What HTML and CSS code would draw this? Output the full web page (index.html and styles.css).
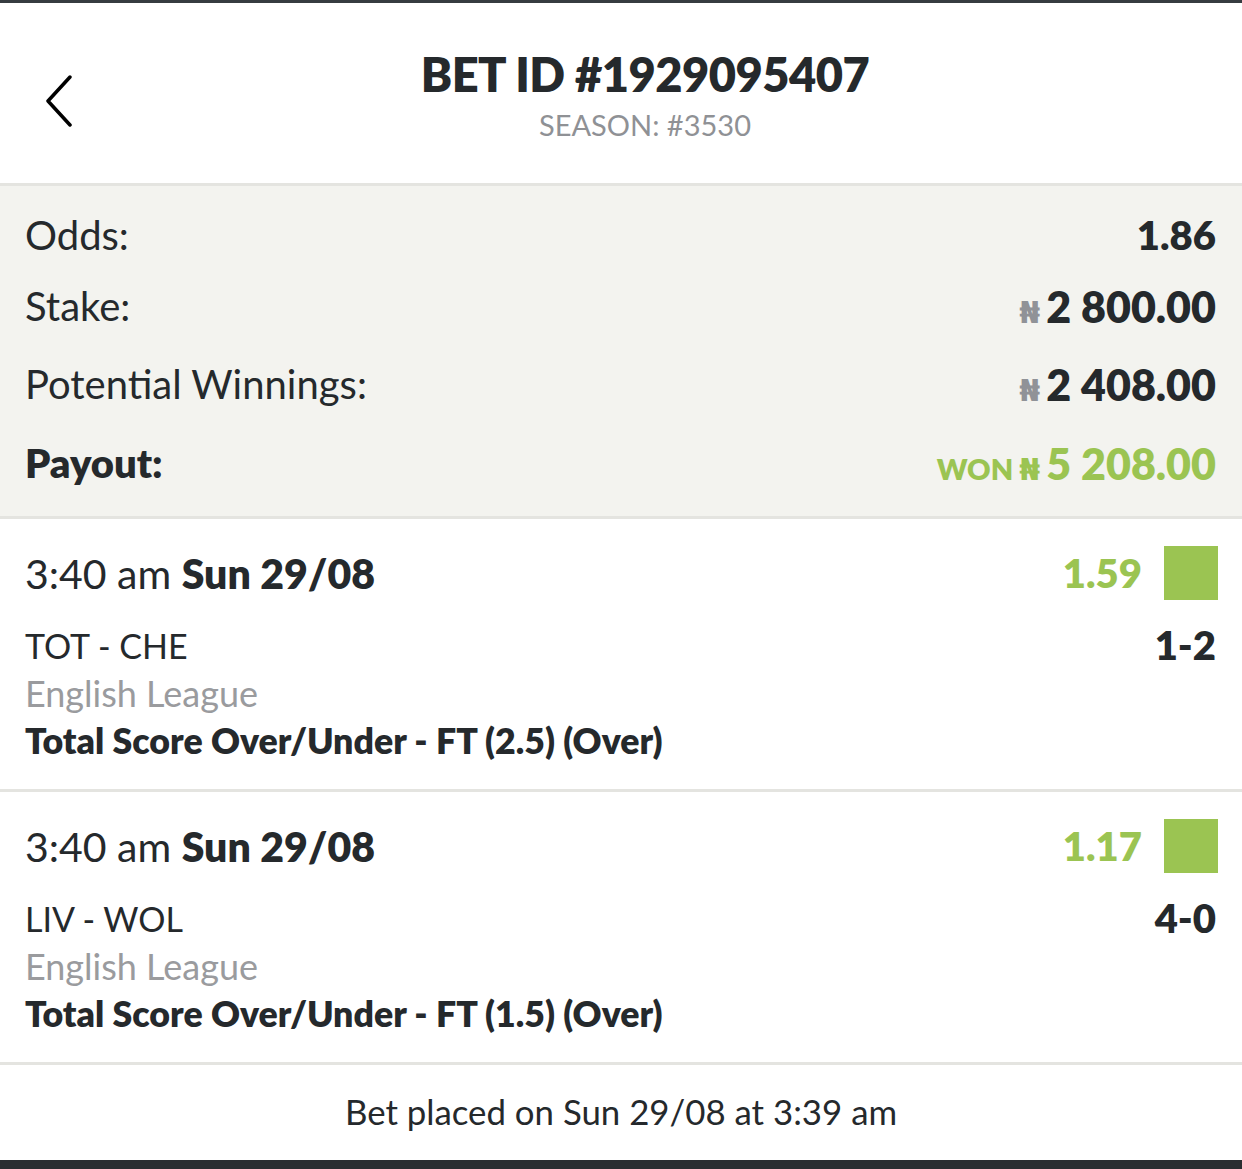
FILE: index.html
```html
<!DOCTYPE html>
<html lang="en">
<head>
  <meta charset="UTF-8" />
  <title>Bet details</title>
  <link rel="stylesheet" href="styles.css">
</head>
<body>
  <div class="page">
    <header class="top">
      <a class="back" href="#">
        <svg width="30" height="52" viewBox="0 0 30 52"><polyline points="26,2 4,26 26,50" fill="none" stroke="#000" stroke-width="3.5" stroke-linecap="round" stroke-linejoin="round"/></svg>
      </a>
      <h1 class="title">BET ID #1929095407</h1>
      <div class="season">SEASON: #3530</div>
    </header>

    <section class="summary">
      <div class="row r1"><span class="label">Odds:</span><span class="value odds">1.86</span></div>
      <div class="row r2"><span class="label">Stake:</span><span class="value"><span class="cur">₦</span>2 800.00</span></div>
      <div class="row r3"><span class="label">Potential Winnings:</span><span class="value"><span class="cur">₦</span>2 408.00</span></div>
      <div class="row r4"><span class="label strong">Payout:</span><span class="value won"><span class="won-tag">WON</span><span class="cur">₦</span>5 208.00</span></div>
    </section>

    <section class="sel">
      <div class="sel-head">
        <div class="when">3:40 am <b>Sun 29/08</b></div>
        <div class="odd">1.59</div>
        <div class="mark"></div>
      </div>
      <div class="sel-line"><span class="teams">TOT - CHE</span><span class="score">1-2</span></div>
      <div class="league">English League</div>
      <div class="market">Total Score Over/Under - FT (2.5) (Over)</div>
    </section>

    <section class="sel">
      <div class="sel-head">
        <div class="when">3:40 am <b>Sun 29/08</b></div>
        <div class="odd">1.17</div>
        <div class="mark"></div>
      </div>
      <div class="sel-line"><span class="teams">LIV - WOL</span><span class="score">4-0</span></div>
      <div class="league">English League</div>
      <div class="market">Total Score Over/Under - FT (1.5) (Over)</div>
    </section>

    <footer class="placed">Bet placed on Sun 29/08 at 3:39 am</footer>
  </div>
</body>
</html>
```

FILE: styles.css
```css
body {
  margin: 0;
  font-family: "Lato", "Open Sans", sans-serif;
  color: #25292c;
  background: #fff;
}

.page {
  border-top: 3px solid #363c40;
  border-bottom: 9px solid #2a2e31;
  height: 1157px;
  display: flex;
  flex-direction: column;
}

.top {
  position: relative;
  height: 180px;
  border-bottom: 3px solid #e4e4e0;
  text-align: center;
  padding-left: 48px;
}

.back {
  position: absolute;
  left: 44px;
  top: 72px;
}

.title {
  margin: 0;
  padding-top: 42px;
  font-size: 47px;
  font-weight: 800;
  line-height: 58px;
  letter-spacing: -0.5px;
}

.season {
  font-size: 29px;
  color: #8f9195;
  line-height: 40px;
  margin-top: 2px;
}

.summary {
  background: #f3f3ef;
  padding: 14px 26px 16px 25px;
  border-bottom: 3px solid #e4e4e0;
}

.row {
  display: flex;
  justify-content: space-between;
  align-items: center;
}

.r1 { height: 70px; }
.r2 { height: 72px; }
.r3 { height: 84px; }
.r4 { height: 74px; }

.label {
  font-size: 40px;
}

.label.strong {
  font-weight: 800;
}

.value {
  font-size: 43px;
  font-weight: 800;
}

.value.odds {
  font-size: 40px;
}

.cur {
  font-family: "DejaVu Sans", sans-serif;
  font-size: 30px;
  color: #909297;
  margin-right: 6px;
  font-weight: bold;
}

.won {
  color: #9bc452;
}

.won .cur {
  color: #9bc452;
}

.won-tag {
  font-size: 29px;
  margin-right: 6px;
}

.sel {
  padding: 27px 24px 24px 25px;
  border-bottom: 3px solid #e4e4e0;
}

.sel-head {
  display: flex;
  align-items: center;
  height: 54px;
  margin-bottom: 21px;
}

.when {
  flex: 1;
  font-size: 41px;
}

.when b {
  font-weight: 800;
}

.odd {
  color: #9bc452;
  font-size: 40px;
  font-weight: 800;
  margin-right: 22px;
}

.mark {
  width: 54px;
  height: 54px;
  background: #9bc452;
}

.sel-line {
  display: flex;
  justify-content: space-between;
  align-items: center;
  height: 48px;
}

.teams {
  font-size: 34px;
}

.score {
  font-size: 40px;
  font-weight: 800;
  margin-right: 2px;
}

.league {
  font-size: 36px;
  line-height: 48px;
  color: #9a9b9e;
}

.market {
  font-size: 35.7px;
  line-height: 48px;
  font-weight: 800;
}

.placed {
  flex: 1;
  display: flex;
  align-items: center;
  justify-content: center;
  font-size: 34.8px;
  padding-bottom: 2px;
}
```
